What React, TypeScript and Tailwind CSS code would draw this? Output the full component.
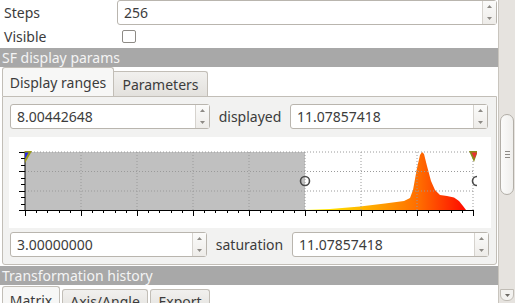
import React from 'react'

const font = { fontFamily: '"Noto Sans", "DejaVu Sans", sans-serif' }

const SpinBox = ({ value, className }: { value: string; className?: string }) => {
    return (
        <div className={`flex h-[25px] rounded-[3px] border border-[#b9b5ae] bg-white ${className ?? ''}`}>
            <div className="flex flex-1 items-center pl-[6px] text-[14px] text-[#3c3c3c]">{value}</div>
            <div className="flex w-[14px] flex-col items-center justify-between border-l border-[#d6d3ce] bg-gradient-to-b from-[#fbfbfa] to-[#eeece9] py-[4px]">
                <svg width="5" height="3" viewBox="0 0 5 3"><path d="M0 3 L2.5 0 L5 3 Z" fill="#8d8a85" /></svg>
                <svg width="5" height="3" viewBox="0 0 5 3"><path d="M0 0 L2.5 3 L5 0 Z" fill="#8d8a85" /></svg>
            </div>
        </div>
    )
}

const Chart = () => {
    const majorX = [25, 81, 137, 193, 249, 305, 361, 417, 473]
    const minorX: number[] = []
    for (let i = 0; i <= 40; i++) minorX.push(25 + i * 11.2)
    const yTicks: number[] = []
    for (let i = 0; i <= 9; i++) yTicks.push(152 + i * (58 / 9))
    return (
        <svg width="482" height="91" viewBox="9 137 482 91">
            <defs>
                <linearGradient id="hist" x1="305" y1="0" x2="470" y2="0" gradientUnits="userSpaceOnUse">
                    <stop offset="0" stopColor="#ffff00" />
                    <stop offset="0.45" stopColor="#ffa000" />
                    <stop offset="0.7" stopColor="#ff6a00" />
                    <stop offset="1" stopColor="#ff0000" />
                </linearGradient>
                <clipPath id="plot">
                    <rect x="9" y="140" width="468" height="90" />
                </clipPath>
            </defs>
            <rect x="25" y="152" width="280" height="58" fill="#c0c0c0" />
            <path d="M305 210 L330 209 L360 206.5 L385 203.5 L404 201 L410 198 L413 190 L417 168 L420 155 L422 152 L424 154 L427 166 L431 181 L435 190 L440 195 L447 196 L454 197.5 L459 201 L463 206 L466 210 Z" fill="url(#hist)" />
            {[152, 171.5, 191].map(y => (
                <line key={y} x1="25" y1={y} x2="473" y2={y} stroke="#9a9a9a" strokeWidth="1" strokeDasharray="1 2" />
            ))}
            {majorX.slice(1).map(x => (
                <line key={x} x1={x} y1="152" x2={x} y2="210" stroke="#9a9a9a" strokeWidth="1" strokeDasharray="1 2" />
            ))}
            <line x1="25" y1="152" x2="25" y2="210.5" stroke="#000" strokeWidth="1" />
            <line x1="24.5" y1="210.5" x2="474" y2="210.5" stroke="#000" strokeWidth="1" />
            {minorX.map((x, i) => (
                <line key={i} x1={Math.round(x) + 0.5} y1="210" x2={Math.round(x) + 0.5} y2={i % 5 === 0 ? 216 : 213} stroke="#000" strokeWidth="1" />
            ))}
            {yTicks.map((y, i) => (
                <line key={i} x1={i % 3 === 0 ? 19 : 21} y1={Math.round(y) + 0.5} x2="25" y2={Math.round(y) + 0.5} stroke="#000" strokeWidth="1" />
            ))}
            <path d="M24.5 151 L32 151 L25 163 Z" fill="#9c9a1a" />
            <path d="M25 152.5 L28.5 152.5 L25 159 Z" fill="#2424e8" />
            <g clipPath="url(#plot)">
                <path d="M469 151 L478 151 L474 162 Z" fill="#8a8a1a" />
                <path d="M471.5 152.5 L477 152.5 L474.5 158.5 Z" fill="#e83030" />
                <circle cx="477" cy="181" r="4.5" fill="none" stroke="#4a4a4a" strokeWidth="1.6" />
            </g>
            <circle cx="305" cy="181" r="4.5" fill="none" stroke="#4a4a4a" strokeWidth="1.6" />
        </svg>
    )
}

const Tab = ({ label, active, className }: { label: string; active?: boolean; className?: string }) => {
    return (
        <div
            className={`flex items-center justify-center rounded-t-[3px] border border-b-0 border-[#c2beb7] text-[14px] text-[#3c3c3c] ${active ? 'h-[29px] bg-[#f7f7f6]' : 'h-[25px] bg-gradient-to-b from-[#f1f0ee] to-[#e3e1dd]'} ${className ?? ''}`}
        >
            {label}
        </div>
    )
}

const App = () => {
    return (
        <div className="flex h-[303px] w-[515px] overflow-hidden bg-white" style={font}>
            <div className="flex w-[498px] flex-col">
                <div className="flex h-[25px] items-center">
                    <div className="w-[117px] pl-[4px] text-[14px] text-[#3c3c3c]">Steps</div>
                    <SpinBox value="256" className="w-[380px]" />
                </div>
                <div className="flex h-[23px] items-center">
                    <div className="w-[122px] pl-[4px] text-[14px] text-[#3c3c3c]">Visible</div>
                    <div className="h-[13px] w-[14px] rounded-[2px] border border-[#8e8b86] bg-white" />
                </div>
                <div className="flex h-[19px] items-center bg-[#a8a8a8] pl-[2px] text-[14px] text-[#f4f4f4]">SF display params</div>
                <div className="flex h-[29px] items-end pl-[2px] pt-[1px]">
                    <Tab label="Display ranges" active className="w-[112px]" />
                    <Tab label="Parameters" className="w-[94px] rounded-tl-none border-l-0" />
                </div>
                <div className="ml-[2px] mr-[1px] flex h-[169px] flex-col rounded-b-[3px] border border-[#c2beb7] bg-[#f2f2f1]">
                    <div className="flex items-center px-[7px] pt-[7px]">
                        <SpinBox value="8.00442648" className="w-[200px]" />
                        <div className="w-[80px] text-center text-[14px] text-[#3c3c3c]">displayed</div>
                        <SpinBox value="11.07857418" className="w-[198px]" />
                    </div>
                    <div className="ml-[6px] mt-[8px] h-[91px] w-[482px] bg-white">
                        <Chart />
                    </div>
                    <div className="flex items-center px-[7px] pt-[4px]">
                        <SpinBox value="3.00000000" className="w-[197px]" />
                        <div className="w-[85px] text-center text-[14px] text-[#3c3c3c]">saturation</div>
                        <SpinBox value="11.07857418" className="w-[197px]" />
                    </div>
                </div>
                <div className="mt-[1px] flex h-[19px] items-center bg-[#a8a8a8] pl-[2px] text-[14px] text-[#f4f4f4]">Transformation history</div>
                <div className="flex h-[18px] items-start gap-[2px] pl-[2px] pt-[1px]">
                    <Tab label="Matrix" active className="w-[58px] items-start pt-[3px]" />
                    <Tab label="Axis/Angle" className="mt-[3px] w-[86px] items-start pt-[1px]" />
                    <Tab label="Export" className="mt-[3px] w-[60px] items-start pt-[1px]" />
                </div>
            </div>
            <div className="flex w-[17px] flex-col border-l border-[#c9c5be] bg-[#e6e3df]">
                <div className="h-[114px]" />
                <div className="mx-[1px] flex h-[81px] items-center justify-center rounded-[7px] border border-[#b2aea7] bg-gradient-to-r from-[#fbfbfa] to-[#efeeec]">
                    <div className="flex flex-col gap-[2px]">
                        <div className="h-px w-[5px] bg-[#8d8a85]" />
                        <div className="h-px w-[5px] bg-[#8d8a85]" />
                        <div className="h-px w-[5px] bg-[#8d8a85]" />
                    </div>
                </div>
                <div className="flex-1" />
                <div className="mx-[1px] mb-[2px] flex h-[12px] items-center justify-center rounded-b-[6px] border border-[#c0bcb5] bg-[#f3f2f0]">
                    <svg width="5" height="3" viewBox="0 0 5 3"><path d="M0 0 L2.5 3 L5 0 Z" fill="#6d6a65" /></svg>
                </div>
            </div>
        </div>
    )
}

export default App
